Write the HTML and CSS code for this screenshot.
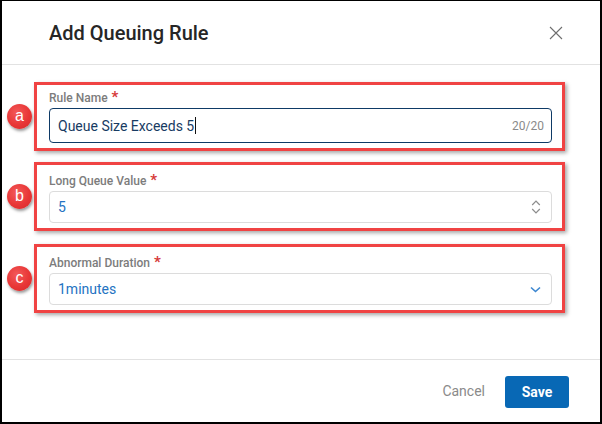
FILE: index.html
```html
<!DOCTYPE html>
<html lang="en">
<head>
<meta charset="utf-8">
<title>Add Queuing Rule</title>
<link rel="stylesheet" href="styles.css">
</head>
<body>
<div class="modal">
  <header class="modal-header">
    <h1 class="modal-title">Add Queuing Rule</h1>
    <button class="close-btn" aria-label="Close">
      <svg width="14" height="14" viewBox="0 0 14 14"><path d="M1 1L13 13M13 1L1 13" stroke="#6e6e6e" stroke-width="1.1" fill="none"/></svg>
    </button>
  </header>
  <main class="modal-body">
    <div class="field field-first">
      <span class="marker">a</span>
      <label class="field-label">Rule Name <span class="req">*</span></label>
      <div class="input input-focused">
        <span class="value value-dark">Queue Size Exceeds 5</span><span class="caret"></span>
        <span class="counter">20/20</span>
      </div>
    </div>
    <div class="field">
      <span class="marker">b</span>
      <label class="field-label">Long Queue Value <span class="req">*</span></label>
      <div class="input">
        <span class="value value-blue">5</span>
        <svg class="trail-icon" width="10" height="14" viewBox="0 0 10 14"><path d="M1.2 5L5 1.2L8.8 5M1.2 9L5 12.8L8.8 9" fill="none" stroke="#8c8c8c" stroke-width="1.2"/></svg>
      </div>
    </div>
    <div class="field field-last">
      <span class="marker">c</span>
      <label class="field-label">Abnormal Duration <span class="req">*</span></label>
      <div class="input">
        <span class="value value-blue">1minutes</span>
        <svg class="trail-icon" width="11" height="7" viewBox="0 0 11 7"><path d="M1 1.5L5.5 5.5L10 1.5" fill="none" stroke="#3d87d0" stroke-width="1.6"/></svg>
      </div>
    </div>
  </main>
  <footer class="modal-footer">
    <button class="btn-cancel">Cancel</button>
    <button class="btn-save">Save</button>
  </footer>
</div>
</body>
</html>
```

FILE: styles.css
```css
* { box-sizing: border-box; }

html, body {
  margin: 0;
  padding: 0;
  background: #fff;
}

body {
  font-family: Roboto, "Liberation Sans", Arial, sans-serif;
}

.modal {
  width: 602px;
  height: 424px;
  border-style: solid;
  border-color: #000;
  border-width: 1px 2px 2px 2px;
  display: flex;
  flex-direction: column;
  background: #fff;
}

.modal-header {
  height: 64px;
  flex: none;
  border-bottom: 1px solid #e2e2e2;
  display: flex;
  align-items: center;
  justify-content: space-between;
  padding: 0 37px 0 47px;
}

.modal-title {
  margin: 0;
  font-size: 20px;
  font-weight: 500;
  color: #262626;
  line-height: 24px;
}

.close-btn {
  border: 0;
  background: none;
  padding: 0;
  width: 14px;
  height: 14px;
  display: flex;
}

.modal-body {
  flex: 1;
  padding: 17px 35px 0 32px;
  display: flex;
  flex-direction: column;
  gap: 11px;
}

.field {
  position: relative;
  border: 3px solid #f04343;
  box-shadow: 2px 2px 4px rgba(0, 0, 0, 0.35);
  padding: 8px 10px 5px 12px;
  display: flex;
  flex-direction: column;
  gap: 2px;
  background: #fff;
}

.field-first {
  padding-top: 5px;
}

.field-last {
  margin-top: 2px;
}

.marker {
  position: absolute;
  left: -30px;
  top: 50%;
  width: 25px;
  height: 25px;
  margin-top: -13px;
  border-radius: 50%;
  background: radial-gradient(circle at 40% 35%, #f35a5a 0%, #e83636 55%, #d42a2a 100%);
  box-shadow: 1px 2px 3px rgba(0, 0, 0, 0.4);
  color: #fff;
  font-size: 16px;
  line-height: 24px;
  text-align: center;
  font-family: "Liberation Sans", Arial, sans-serif;
}

.field-label {
  font-size: 12px;
  line-height: 16px;
  font-weight: 500;
  color: #7c7c7c;
}

.req {
  color: #d63a3a;
  font-size: 15px;
  font-weight: 700;
  line-height: 12px;
  margin-left: 1px;
}

.input {
  height: 32px;
  border: 1px solid #dcdcdc;
  border-radius: 4px;
  padding: 0 10px 0 8px;
  display: flex;
  align-items: center;
}

.input-focused {
  height: 35px;
  border-color: #0e3a66;
  padding-right: 7px;
}

.value {
  font-size: 14px;
  line-height: 18px;
}

.value-dark {
  color: #173b63;
}

.value-blue {
  color: #2473c2;
}

.caret {
  width: 1px;
  height: 17px;
  background: #111;
  margin-left: 1px;
}

.counter {
  margin-left: auto;
  font-size: 12px;
  color: #8a8a8a;
}

.trail-icon {
  margin-left: auto;
}

.modal-footer {
  height: 63px;
  flex: none;
  border-top: 1px solid #e2e2e2;
  display: flex;
  align-items: center;
  justify-content: flex-end;
  padding: 0 31px 0 0;
  gap: 20px;
}

.btn-cancel {
  border: 0;
  background: none;
  padding: 0;
  font-family: inherit;
  font-size: 14px;
  color: #8a8a8a;
}

.btn-save {
  width: 64px;
  height: 32px;
  border: 0;
  border-radius: 3px;
  background: #0868b5;
  color: #fff;
  font-family: inherit;
  font-size: 14px;
  font-weight: 700;
  margin-top: 2px;
}
```
